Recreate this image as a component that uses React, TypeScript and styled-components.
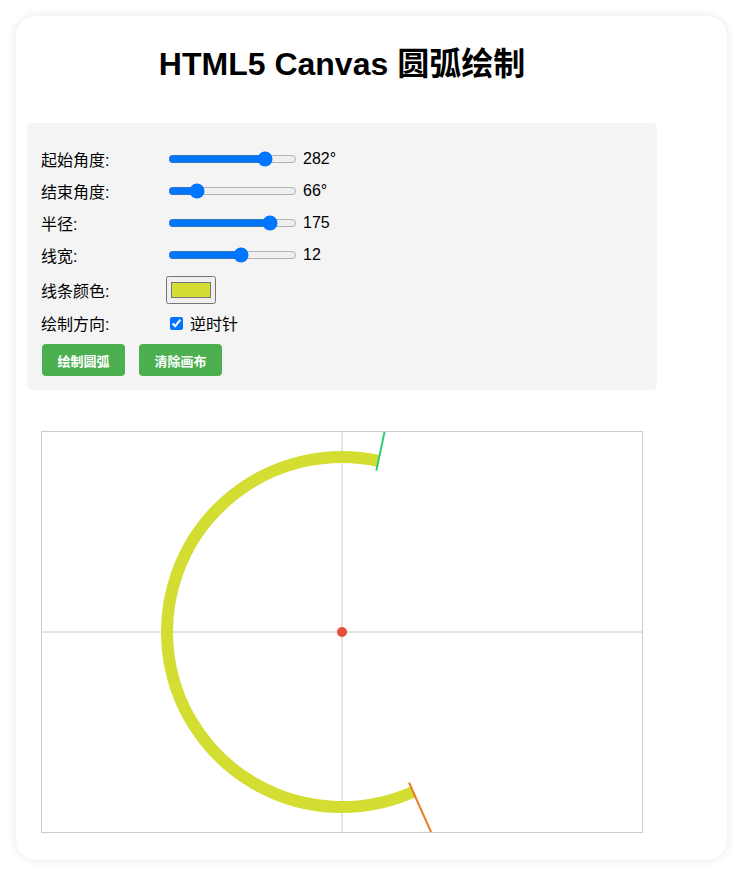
import React, { useState } from "react";
import styled, { createGlobalStyle } from "styled-components";

const Global = createGlobalStyle`
  html, body { margin: 0; padding: 0; background: #ffffff; }
  body { padding: 16px; font-family: "Liberation Sans", "Noto Sans CJK SC", Arial, sans-serif; color: #000; }
  * { box-sizing: border-box; }
`;

const Card = styled.div`
  width: 711px;
  background: #fff;
  border-radius: 20px;
  box-shadow: 0 0 10px rgba(0, 0, 0, 0.1);
  padding: 30px 11px 27px;
`;

const Inner = styled.div`
  width: 630px;
`;

const Title = styled.h1`
  margin: 0 0 40px;
  height: 37px;
  font-size: 32px;
  line-height: 37px;
  font-weight: bold;
  text-align: center;
  font-family: "Liberation Sans", "Noto Sans CJK SC", Arial, sans-serif;
`;

const Panel = styled.div`
  background: #f4f4f4;
  border-radius: 5px;
  padding: 25px 14px 14px;
`;

const Row = styled.div<{ $h?: number; $mb?: number }>`
  display: flex;
  align-items: center;
  height: ${(p) => p.$h ?? 22}px;
  margin-bottom: ${(p) => p.$mb ?? 10}px;
  font-size: 16px;
`;

const Label = styled.span`
  width: 125px;
  flex: none;
`;

const Range = styled.input`
  margin: 2px;
  width: 129px;
`;

const Value = styled.span`
  margin-left: 4px;
`;

const Color = styled.input`
  margin: 0;
  width: 50px;
  height: 28px;
`;

const Check = styled.input`
  margin: 3px 3px 3px 4px;
`;

const CheckText = styled.span`
  margin-left: 4px;
`;

const Buttons = styled.div`
  display: flex;
  gap: 14px;
  padding-left: 1px;
`;

const Button = styled.button`
  background: #4caf50;
  color: #fff;
  border: none;
  border-radius: 4px;
  width: 83px;
  padding: 0;
  height: 32px;
  font-size: 13px;
  font-weight: 600;
  font-family: "Liberation Sans", "Noto Sans CJK SC", Arial, sans-serif;
  cursor: pointer;
`;

const CanvasBox = styled.svg`
  display: block;
  margin: 41px 0 0 14px;
  border: 1px solid #ccc;
  background: #fff;
  width: 602px;
  height: 402px;
`;

function pt(r: number, deg: number): [number, number] {
  const a = (deg * Math.PI) / 180;
  return [300 + r * Math.cos(a), 200 + r * Math.sin(a)];
}

export default function App() {
  const [start, setStart] = useState(282);
  const [end, setEnd] = useState(66);
  const [radius, setRadius] = useState(175);
  const [width, setWidth] = useState(12);
  const [color, setColor] = useState("#d4dd32");
  const [ccw, setCcw] = useState(true);

  const [sx, sy] = pt(radius, start);
  const [ex, ey] = pt(radius, end);
  let span = ccw ? start - end : end - start;
  span = ((span % 360) + 360) % 360;
  const large = span > 180 ? 1 : 0;
  const sweep = ccw ? 0 : 1;
  const arc = `M ${sx} ${sy} A ${radius} ${radius} 0 ${large} ${sweep} ${ex} ${ey}`;
  const [g1x, g1y] = pt(radius - 10, start);
  const [g2x, g2y] = pt(radius + 50, start);
  const [o1x, o1y] = pt(radius - 10, end);
  const [o2x, o2y] = pt(radius + 50, end);

  return (
    <>
      <Global />
      <Card>
        <Inner>
          <Title>HTML5 Canvas 圆弧绘制</Title>
          <Panel>
            <Row>
              <Label>起始角度:</Label>
              <Range type="range" min={0} max={360} value={start} onChange={(e) => setStart(+e.target.value)} />
              <Value>{start}°</Value>
            </Row>
            <Row>
              <Label>结束角度:</Label>
              <Range type="range" min={0} max={360} value={end} onChange={(e) => setEnd(+e.target.value)} />
              <Value>{end}°</Value>
            </Row>
            <Row>
              <Label>半径:</Label>
              <Range type="range" min={50} max={200} value={radius} onChange={(e) => setRadius(+e.target.value)} />
              <Value>{radius}</Value>
            </Row>
            <Row>
              <Label>线宽:</Label>
              <Range type="range" min={1} max={20} value={width} onChange={(e) => setWidth(+e.target.value)} />
              <Value>{width}</Value>
            </Row>
            <Row $h={28} $mb={8}>
              <Label>线条颜色:</Label>
              <Color type="color" value={color} onChange={(e) => setColor(e.target.value)} />
            </Row>
            <Row>
              <Label>绘制方向:</Label>
              <Check type="checkbox" checked={ccw} onChange={(e) => setCcw(e.target.checked)} />
              <CheckText>逆时针</CheckText>
            </Row>
            <Buttons>
              <Button>绘制圆弧</Button>
              <Button>清除画布</Button>
            </Buttons>
          </Panel>
          <CanvasBox viewBox="0 0 600 400">
            <line x1={0} y1={200} x2={600} y2={200} stroke="#cccccc" strokeWidth={1} />
            <line x1={300} y1={0} x2={300} y2={400} stroke="#cccccc" strokeWidth={1} />
            <path d={arc} fill="none" stroke={color} strokeWidth={width} />
            <line x1={g1x} y1={g1y} x2={g2x} y2={g2y} stroke="#2ecc71" strokeWidth={2} />
            <line x1={o1x} y1={o1y} x2={o2x} y2={o2y} stroke="#e67e22" strokeWidth={2} />
            <circle cx={300} cy={200} r={5} fill="#e74c3c" />
          </CanvasBox>
        </Inner>
      </Card>
    </>
  );
}
